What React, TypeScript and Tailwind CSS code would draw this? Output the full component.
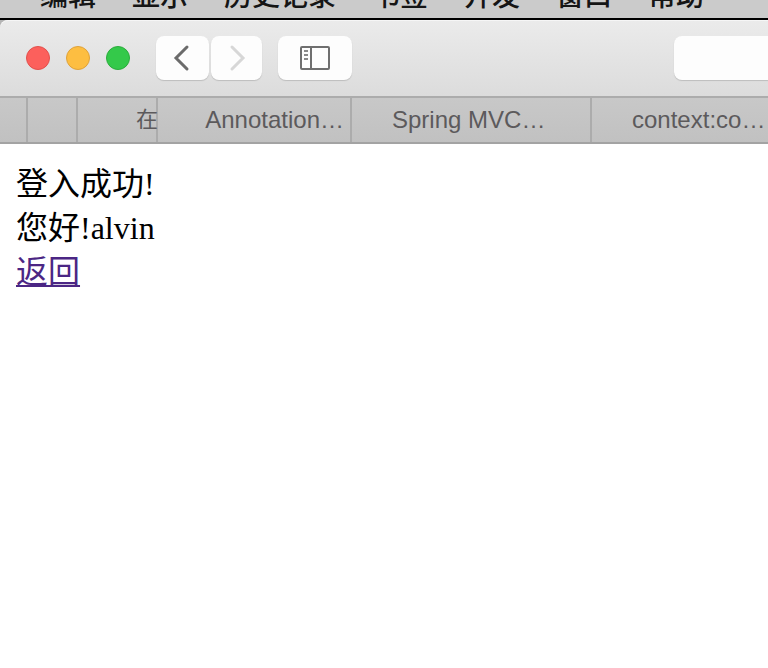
import React from 'react';

const menus = ['编辑', '显示', '历史记录', '书签', '开发', '窗口', '帮助'];

const tabs = [
  { id: 'pin-1', title: '', className: 'w-7 border-r-2' },
  { id: 'pin-2', title: '', className: 'w-[50px] border-r-2' },
  { id: 'zai', title: '在', className: 'w-20 border-r-2 pl-[58px] text-[22px]' },
  { id: 'annotation', title: 'Annotation…', className: 'w-[194px] border-r-2 justify-end pr-1.5' },
  { id: 'spring', title: 'Spring MVC…', className: 'w-60 border-r-2 pl-10' },
  { id: 'context', title: 'context:co…', className: 'flex-1 pl-10' },
];

function MenuBar() {
  return (
    <nav className="flex h-5 items-end gap-9 overflow-hidden border-b-2 border-black bg-[#cbcbcb] pb-1.5 pl-10 font-['Noto_Sans_CJK_SC',sans-serif] text-[28px] leading-9 font-medium text-[#151515]">
      {menus.map((menu) => (
        <button key={menu} className="shrink-0 whitespace-nowrap">{menu}</button>
      ))}
    </nav>
  );
}

function WindowButtons() {
  return (
    <div className="flex gap-4">
      <button aria-label="Close" className="size-6 rounded-full border border-[#e2504c] bg-[#fc605c]" />
      <button aria-label="Minimize" className="size-6 rounded-full border border-[#dfa23a] bg-[#fdbe41]" />
      <button aria-label="Zoom" className="size-6 rounded-full border border-[#2bac3c] bg-[#34c94a]" />
    </div>
  );
}

function Toolbar() {
  const button = 'flex h-11 items-center justify-center rounded-lg bg-[#fdfdfd] shadow-[0_1px_1px_#bdbdbd]';

  return (
    <div className="bg-[#b4b4b4]">
      <div className="flex h-[76px] items-center rounded-tl-lg bg-linear-to-b from-[#ebebeb] to-[#dcdcdc] pl-[26px] shadow-[inset_0_1px_0_#f6f6f6]">
        <WindowButtons />
        <div className="ml-[26px] flex gap-0.5">
          <button aria-label="Back" className={`${button} w-[53px]`}>
            <svg width="24" height="28" viewBox="0 0 24 28" fill="none" stroke="#6b6b6b" strokeWidth="3" strokeLinecap="round">
              <path d="M16 3 5 14 16 25" />
            </svg>
          </button>
          <button aria-label="Forward" className={`${button} w-[51px]`} disabled>
            <svg width="24" height="28" viewBox="0 0 24 28" fill="none" stroke="#d7d7d7" strokeWidth="3" strokeLinecap="round">
              <path d="M7 3 18 14 7 25" />
            </svg>
          </button>
        </div>
        <button aria-label="Sidebar" className={`${button} ml-4 w-[74px]`}>
          <svg width="30" height="24" viewBox="0 0 30 24" fill="none" stroke="#6f6f6f" strokeWidth="2">
            <rect x="1" y="1" width="28" height="22" rx="1" />
            <path d="M11 1v22" />
            <path d="M4 5h4M4 9h4M4 13h4" stroke="#8a8a8a" />
          </svg>
        </button>
        <input
          type="text"
          aria-label="Address"
          className="ml-[322px] h-11 min-w-0 flex-1 rounded-l-lg bg-[#fdfdfd] px-3 text-2xl shadow-[0_1px_1px_#bdbdbd] outline-none"
        />
      </div>
    </div>
  );
}

function TabBar() {
  return (
    <div className="flex h-12 border-t-2 border-b-2 border-t-[#acacac] border-b-[#a3a3a3] bg-linear-to-b from-[#c8c8c8] to-[#c1c1c1] font-['Liberation_Sans','Noto_Sans_CJK_SC',sans-serif] text-[24px] leading-10 text-[#5c5a5c]">
      {tabs.map((tab) => (
        <button
          key={tab.id}
          aria-label={tab.title || 'Tab'}
          className={`flex shrink-0 items-center border-[#acacac] whitespace-nowrap ${tab.className}`}
        >
          {tab.title}
        </button>
      ))}
    </div>
  );
}

export default function App() {
  return (
    <div className="min-h-screen overflow-hidden bg-white">
      <MenuBar />
      <Toolbar />
      <TabBar />
      <main className="px-4 py-[18px] font-['Liberation_Serif','Noto_Sans_CJK_SC',serif] text-[32px] leading-11 text-black">
        <p>登入成功!</p>
        <p>您好!alvin</p>
        <a href="#" className="text-[#4b2684] underline decoration-2 underline-offset-2">返回</a>
      </main>
    </div>
  );
}
